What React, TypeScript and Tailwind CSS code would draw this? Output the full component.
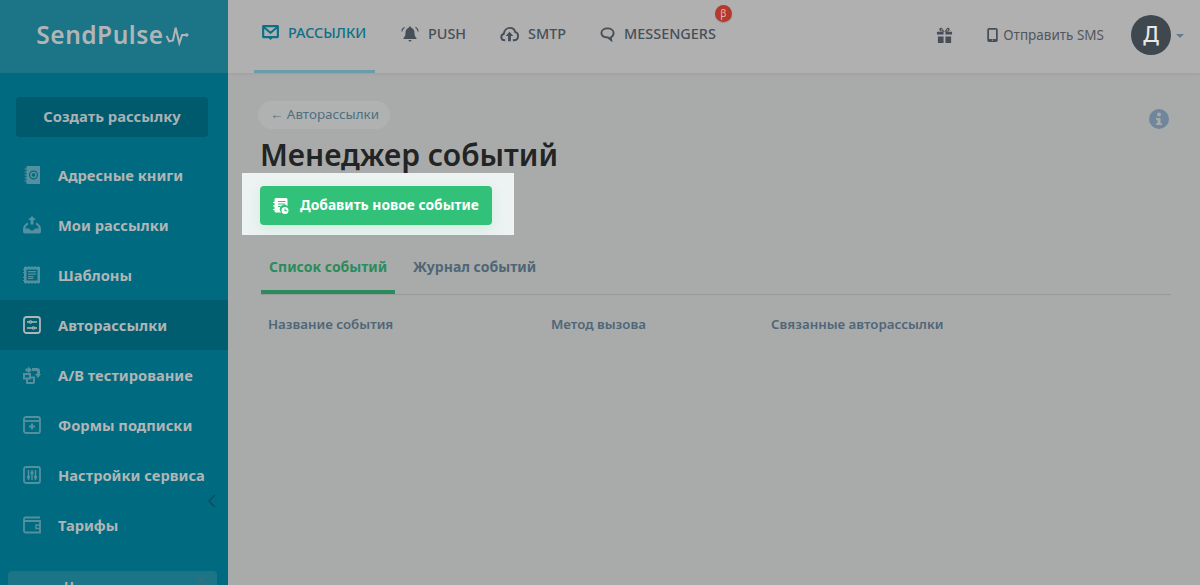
import type { ReactNode } from 'react'

const iconClass = 'h-[18px] w-[18px]'

function BookIcon() {
  return (
    <svg viewBox="0 0 18 18" className={iconClass}>
      <path fill="currentColor" fillRule="evenodd" d="M3.500 0H17v18H3.500v-2.500H1.500v-1h2v-2h-2v-1h2v-2h-2v-1h2v-2h-2v-1h2v-2h-2v-1h2zM10.500 4.500a4.500 4.500 0 1 0 0 9 4.500 4.500 0 0 0 0-9zm0 1.200a3.300 3.300 0 1 1 0 6.600 3.300 3.300 0 0 1 0-6.600zm0 1.500a1.800 1.800 0 1 0 0 3.600 1.800 1.800 0 0 0 0-3.600z" />
    </svg>
  )
}

function OutboxIcon() {
  return (
    <svg viewBox="0 0 18 18" className={iconClass}>
      <path fill="currentColor" d="M9 0l4 4h-2.500v4.500h-3V4H5zM5 6.500v2.300C3.500 9.500 2.500 11 2.500 12.500H6c.5 1.200 1.600 2 3 2s2.500-.8 3-2h3.500c0-1.500-1-3-2.500-3.700V6.500c2.700 1 5 3.500 5 6.500v2.500a2 2 0 0 1-2 2H2a2 2 0 0 1-2-2V13c0-3 2.300-5.500 5-6.500z" />
    </svg>
  )
}

function TemplateIcon() {
  return (
    <svg viewBox="0 0 18 18" className={iconClass}>
      <path fill="currentColor" fillRule="evenodd" d="M1 1h1.500v-1h1v1h2v-1h1v1h2v-1h1v1h2v-1h1v1h2v-1h1v1H17v16h-1.500v1h-1v-1h-2v1h-1v-1h-2v1h-1v-1h-2v1h-1v-1h-2v1h-1v-1H1v-2H0v-1h1v-2H0v-1h1v-2H0V9h1V7H0V6h1V4H0V3h1zm2.500 2.500v11h11v-11zM5 5h8v1.200H5zm0 2.500h8v1.200H5zM5 10h5.500v1.200H5zm0 2h5.500v1H5z" />
    </svg>
  )
}

function AutoIcon() {
  return (
    <svg viewBox="0 0 18 18" className={iconClass} fill="none" stroke="currentColor">
      <rect x="1" y="1" width="16" height="16" rx="2.500" strokeWidth="1.800" />
      <path strokeWidth="1.500" d="M4 6h2M9 6h5M4 12h5M12 12h2" />
      <circle cx="7.500" cy="6" r="1.200" strokeWidth="1.200" />
      <circle cx="10.500" cy="12" r="1.200" strokeWidth="1.200" />
    </svg>
  )
}

function AbIcon() {
  return (
    <svg viewBox="0 0 18 18" className={iconClass}>
      <path fill="currentColor" fillRule="evenodd" d="M5 0.500l4 3.500-4 3.500V5.500H2.500v-3H5zM9 2h5a3 3 0 0 1 3 3v3h1l-3 4-3-4h2V5H9zM0 7h8v3.500h4V16a2 2 0 0 1-2 2H4a1 1 0 0 1-1-1v-3.500H0zm2 2v2.500h4V9zm3 4.500V16h5v-3.500H8v1z" />
    </svg>
  )
}

function FormIcon() {
  return (
    <svg viewBox="0 0 18 18" className={iconClass} fill="none" stroke="currentColor">
      <rect x="1" y="1" width="16" height="16" rx="2" strokeWidth="1.800" />
      <path strokeWidth="1.800" d="M1 5h16" />
      <path strokeWidth="2" d="M9 7.500v6M6 10.500h6" />
    </svg>
  )
}

function SlidersIcon() {
  return (
    <svg viewBox="0 0 18 18" className={iconClass} fill="none" stroke="currentColor">
      <rect x="1" y="1" width="16" height="16" rx="2" strokeWidth="1.800" />
      <path strokeWidth="1.500" d="M5.500 4v10M9 4v10M12.500 4v10" />
      <path strokeWidth="2.500" d="M4 11h3M7.500 7h3M11 11h3" />
    </svg>
  )
}

function WalletIcon() {
  return (
    <svg viewBox="0 0 18 18" className={iconClass} fill="none" stroke="currentColor">
      <path strokeWidth="1.800" d="M17 1.500H2.500A1.500 1.500 0 0 0 1 3v12a1.500 1.500 0 0 0 1.500 1.500H17V5H1" />
      <path strokeWidth="1.500" d="M17 9h-4v3.500h4" />
    </svg>
  )
}

function EnvelopeIcon() {
  return (
    <svg viewBox="0 0 18 16" className="h-[15px] w-[17px]">
      <path fill="currentColor" fillRule="evenodd" d="M1.500 0h15A1.500 1.500 0 0 1 18 1.500v11a1.500 1.500 0 0 1-1.500 1.500H11l-2 2-2-2H1.500A1.500 1.500 0 0 1 0 12.500v-11A1.500 1.500 0 0 1 1.500 0zM3.500 2.500L9 7l5.500-4.500zM2.300 4v7.700h13.400V4L9 9.800z" />
    </svg>
  )
}

function BellIcon() {
  return (
    <svg viewBox="0 0 18 18" className="h-[18px] w-[18px]">
      <path fill="currentColor" d="M9 1.500c.8 0 1.200.5 1.200 1.200C12.500 3.500 13.500 5.500 13.500 8c0 2.500.8 4 2 5v1h-13v-1c1.200-1 2-2.500 2-5 0-2.500 1-4.500 3.300-5.300 0-.7.400-1.200 1.200-1.200zM7.500 15h3a1.500 1.500 0 0 1-3 0z" />
      <path fill="none" stroke="currentColor" strokeWidth="1.100" d="M3.500 2.200C2 3.200 1 4.700.800 6.500M14.500 2.200c1.500 1 2.500 2.500 2.700 4.300" />
    </svg>
  )
}

function CloudIcon() {
  return (
    <svg viewBox="0 0 20 16" className="h-[16px] w-[19px]">
      <path fill="none" stroke="currentColor" strokeWidth="2" d="M5.500 14.500H4.500a3.300 3.300 0 0 1-.6-6.500C4.500 4 7.500 1.500 10.500 1.500c3 0 5 2 5.500 4.500 2 .3 3 2 3 4 0 2.500-1.700 4.500-4.500 4.500h-1" />
      <path fill="currentColor" d="M10 5.500l4 4.500h-2.500v5.500h-3V10H6z" />
    </svg>
  )
}

function ChatIcon() {
  return (
    <svg viewBox="0 0 16 16" className="h-[15px] w-[15px]" fill="none" stroke="currentColor">
      <path strokeWidth="2" d="M8 1.500c3.500 0 6.500 2 6.500 5 0 2.500-1.500 4-3 4.500l.5 3-3.500-2.800C4.500 11.200 1.500 9.500 1.500 6.500c0-3 3-5 6.500-5z" />
    </svg>
  )
}

function GiftIcon() {
  return (
    <svg viewBox="0 0 18 18" className="h-[17px] w-[17px]">
      <path fill="currentColor" fillRule="evenodd" d="M1 5h7v3H1zm9 0h7v3h-7zM2 10h6v7H2zm8 0h6v7h-6zM9 5C7 5 3.500 5 3.500 3S5 .500 6 1s3 4 3 4zm0 0c2 0 5.500 0 5.500-2S13 .500 12 1 9 5 9 5zM6 2.500c-.8 0-1 .4-1 .7s1.500.6 2 .6c-.3-.5-.5-1.300-1-1.300zm6 0c-.5 0-.7.8-1 1.300.5 0 2-.3 2-.6s-.2-.7-1-.7z" />
    </svg>
  )
}

function PhoneIcon() {
  return (
    <svg viewBox="0 0 12 16" className="h-[14px] w-[11px]">
      <path fill="currentColor" fillRule="evenodd" d="M2 0h8a2 2 0 0 1 2 2v12a2 2 0 0 1-2 2H2a2 2 0 0 1-2-2V2a2 2 0 0 1 2-2zm0 2v10.500h8V2zm4 11a.8.8 0 1 0 0 1.600A.8.8 0 0 0 6 13z" />
    </svg>
  )
}

function InfoIcon() {
  return (
    <svg viewBox="0 0 20 20" className="h-5 w-5 text-[#70869a]">
      <path fill="currentColor" fillRule="evenodd" d="M10 0a10 10 0 1 1 0 20 10 10 0 0 1 0-20zM10 3.500a2 2 0 1 0 0 4 2 2 0 0 0 0-4zM7 9v1.800h1.500v3.400H7V16h6v-1.800h-1.500V9z" />
    </svg>
  )
}

function EventBookIcon() {
  return (
    <svg viewBox="0 0 16 16" className="h-4 w-4">
      <path fill="currentColor" fillRule="evenodd" d="M3 0h10a1.500 1.500 0 0 1 1.500 1.500V8a4.500 4.500 0 0 0-6.400 6.500H3a1.500 1.500 0 0 1-1.500-1.500v-1H0v-1h1.500V8.500H0v-1h1.500V5H0V4h1.500V1.500A1.500 1.500 0 0 1 3 0zm2 3v1h7.500V3zm0 2.500v1h7.500v-1zM5 8v1h2.500V8z" />
      <path fill="currentColor" fillRule="evenodd" d="M12 9a3.500 3.500 0 1 1 0 7 3.500 3.500 0 0 1 0-7zm-.5 1.500v2.700h2.500v-1h-1.500v-1.700z" />
    </svg>
  )
}

function SidebarItem({ icon, label, active }: { icon: ReactNode; label: string; active?: boolean }) {
  return (
    <div className={`flex h-[50px] shrink-0 items-center gap-[17px] pl-[23px] text-[14.700px] font-bold text-[#b1b5b6] ${active ? 'bg-[#005d70]' : ''}`}>
      <span className={`flex w-[18px] justify-center ${active ? 'text-[#b1b5b6]' : 'text-[#55909f]'}`}>{icon}</span>
      <span className="whitespace-nowrap">{label}</span>
    </div>
  )
}

function TopNavItem({ icon, label, active, className }: { icon: ReactNode; label: string; active?: boolean; className?: string }) {
  return (
    <div className={`flex h-[73px] items-center gap-[9px] pb-[5px] text-[14.400px] font-medium ${active ? 'border-b-[3px] border-[#6a9daa] text-[#0e6f86]' : 'text-[#464f58]'} ${className ?? ''}`}>
      {icon}
      <span>{label}</span>
    </div>
  )
}

export default function App() {
  return (
    <div className="flex h-[585px] w-[1200px] overflow-hidden bg-[#a9abaa] font-['Noto_Sans','Open_Sans',sans-serif]">
      {/* Sidebar */}
      <aside className="relative flex w-[228px] shrink-0 flex-col overflow-hidden bg-[#006b80]">
        <div className="flex h-[73px] shrink-0 items-center justify-center bg-[#1c7487] pr-[2px] pb-[3px]">
          <span className="text-[24.500px] font-semibold tracking-[0.5px] text-[#b1b5b6]">SendPulse</span>
          <svg viewBox="0 0 26 24" className="ml-[1px] h-[22px] w-[25px]" fill="none" stroke="#b1b5b6" strokeWidth="2.200">
            <path d="M1 13l3 6 4-1 3-14 4 17 3-9h4" />
            <circle cx="23" cy="12" r="2" fill="#b1b5b6" stroke="none" />
          </svg>
        </div>
        <div className="shrink-0 pt-6 pr-5 pb-[13px] pl-4">
          <div className="flex h-10 items-center justify-center rounded bg-[#005a6d] pb-[1px] text-[14.800px] font-bold text-[#a9b1b4]">
            Создать рассылку
          </div>
        </div>
        <SidebarItem icon={<BookIcon />} label="Адресные книги" />
        <SidebarItem icon={<OutboxIcon />} label="Мои рассылки" />
        <SidebarItem icon={<TemplateIcon />} label="Шаблоны" />
        <SidebarItem icon={<AutoIcon />} label="Авторассылки" active />
        <SidebarItem icon={<AbIcon />} label="A/B тестирование" />
        <SidebarItem icon={<FormIcon />} label="Формы подписки" />
        <SidebarItem icon={<SlidersIcon />} label="Настройки сервиса" />
        <SidebarItem icon={<WalletIcon />} label="Тарифы" />
        <svg viewBox="0 0 10 16" className="absolute top-[494px] left-[207px] h-[14px] w-[9px]" fill="none" stroke="#0d4759" strokeWidth="1.300">
          <path d="M9 1L2 8l7 7" />
        </svg>
        <div className="mt-[21px] mr-[11px] ml-2 flex h-[40px] shrink-0 justify-between rounded-t bg-[#1c7487] pt-[7px] pr-[11px] pl-[56px] text-[13px] leading-[16px] font-bold text-[#b1b5b6]">
          <span>Н</span>
          <svg viewBox="0 0 10 10" className="-mt-[2px] h-[10px] w-[10px]" fill="none" stroke="#3f6b78" strokeWidth="1.200">
            <path d="M1 1l8 8M9 1L1 9" />
          </svg>
        </div>
      </aside>

      {/* Main column */}
      <div className="flex min-w-0 flex-1 flex-col">
        <header className="flex h-[73px] shrink-0 items-start bg-[#b0b0b0] pr-4 shadow-[0_1px_3px_rgba(0,0,0,0.08)]">
          <TopNavItem className="ml-[26px] w-[121px] pl-[8px]" icon={<EnvelopeIcon />} label="РАССЫЛКИ" active />
          <TopNavItem className="ml-[26px]" icon={<BellIcon />} label="PUSH" />
          <TopNavItem className="ml-[34px]" icon={<CloudIcon />} label="SMTP" />
          <div className="relative ml-[34px]">
            <TopNavItem icon={<ChatIcon />} label="MESSENGERS" />
            <span className="absolute top-[5px] -right-[16px] flex h-[17px] w-[17px] items-center justify-center rounded-full bg-[#b8392c] text-[10px] text-[#d9b6b0] shadow-[0_1px_1px_rgba(0,0,0,0.2)]">
              β
            </span>
          </div>
          <div className="ml-auto flex h-[73px] items-center pb-[3px] text-[#464f58]">
            <GiftIcon />
            <span className="ml-[34px]"><PhoneIcon /></span>
            <span className="ml-[5px] text-[13.500px] text-[#50575f]">Отправить SMS</span>
            <span className="ml-[27px] flex h-10 w-10 items-center justify-center rounded-full bg-[#3f484f] text-[21px] font-medium text-[#e8e8e8]">
              Д
            </span>
            <span className="mt-[1px] ml-[5px] h-0 w-0 border-x-[4px] border-t-[4px] border-x-transparent border-t-[#5f7d8c]" />
          </div>
        </header>

        <main className="flex flex-col pt-[28px] pr-[29px] pl-[30px]">
          <div className="flex items-start justify-between">
            <span className="flex h-[28px] items-center rounded-full bg-[#b0b2b1] pr-[11px] pb-[1px] pl-[12px] text-[13.400px] text-[#4f6f7e]">
              ← Авторассылки
            </span>
            <span className="mt-2 mr-[2px]"><InfoIcon /></span>
          </div>
          <h1 className="mt-[7px] ml-[2px] h-[37px] text-[30px] leading-[37px] font-semibold text-[#222425]">
            Менеджер событий
          </h1>
          <div className="-ml-[16px] w-[272px] bg-[#edf3f2] pt-[13px] pb-[10px] pl-[18px]">
            <button className="flex h-[39px] w-[232px] items-center gap-[11px] rounded bg-[#32c178] pl-[13px] text-[13.800px] font-bold text-white shadow-[0_4px_14px_rgba(50,193,120,0.15)]">
              <EventBookIcon />
              Добавить новое событие
            </button>
          </div>

          {/* Tabs */}
          <div className="mt-3 ml-[3px] flex h-[48px] border-b border-[#969a99] text-[14px] font-bold whitespace-nowrap">
            <span className="h-[47px] w-[134px] border-b-[4px] border-[#2a8c5c] pt-[9px] pl-2 text-[#2a8c5c]">Список событий</span>
            <span className="pt-[9px] pl-[18px] text-[#4f6677]">Журнал событий</span>
          </div>

          {/* Table head */}
          <div className="mt-5 flex text-[13.300px] font-semibold text-[#4f6677]">
            <span className="ml-[10px] w-[283px]">Название события</span>
            <span className="w-[220px]">Метод вызова</span>
            <span>Связанные авторассылки</span>
          </div>
        </main>
      </div>
    </div>
  )
}
